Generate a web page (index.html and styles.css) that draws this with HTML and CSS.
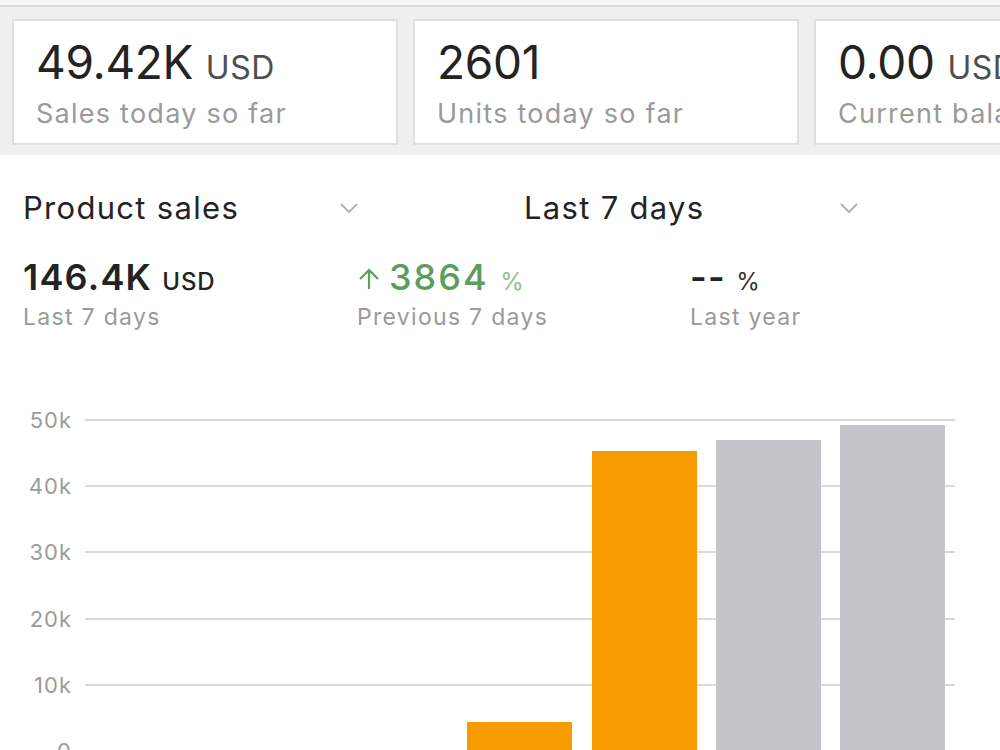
FILE: index.html
```html
<!DOCTYPE html>
<html lang="en">
<head>
    <meta charset="UTF-8">
    <meta name="viewport" content="width=device-width, initial-scale=1.0">
    <title>Sales dashboard</title>
    <link rel="stylesheet" href="styles.css">
</head>
<body>

    <div class="top-edge"></div>

    <!-- Today summary cards -->
    <section class="summary">
        <div class="card">
            <div class="card-value">49.42K <span class="unit">USD</span></div>
            <div class="card-label">Sales today so far</div>
        </div>
        <div class="card">
            <div class="card-value">2601</div>
            <div class="card-label">Units today so far</div>
        </div>
        <div class="card">
            <div class="card-value">0.00 <span class="unit">USD</span></div>
            <div class="card-label">Current balance</div>
        </div>
    </section>

    <section class="sales">
        <div class="filters">
            <div class="dropdown">
                <span>Product sales</span>
                <svg class="chevron" viewBox="0 0 20 12" width="20" height="12"><polyline points="2,2 10,10 18,2"/></svg>
            </div>
            <div class="dropdown">
                <span>Last 7 days</span>
                <svg class="chevron" viewBox="0 0 20 12" width="20" height="12"><polyline points="2,2 10,10 18,2"/></svg>
            </div>
        </div>

        <div class="stats">
            <div class="stat">
                <div class="stat-value">146.4K <span class="stat-unit">USD</span></div>
                <div class="stat-label">Last 7 days</div>
            </div>
            <div class="stat">
                <div class="stat-value up">
                    <svg class="arrow" viewBox="0 0 24 24" width="24" height="24"><path d="M12 22V3M3 12l9-9 9 9"/></svg>3864 <span class="stat-unit">%</span>
                </div>
                <div class="stat-label">Previous 7 days</div>
            </div>
            <div class="stat">
                <div class="stat-value">-- <span class="stat-unit dark">%</span></div>
                <div class="stat-label">Last year</div>
            </div>
        </div>

        <!-- Bar chart, 0 to 50k -->
        <div class="chart">
            <div class="tick"><span class="tick-label">50k</span><span class="tick-line"></span></div>
            <div class="tick"><span class="tick-label">40k</span><span class="tick-line"></span></div>
            <div class="tick"><span class="tick-label">30k</span><span class="tick-line"></span></div>
            <div class="tick"><span class="tick-label">20k</span><span class="tick-line"></span></div>
            <div class="tick"><span class="tick-label">10k</span><span class="tick-line"></span></div>
            <div class="tick"><span class="tick-label">0</span><span class="tick-line"></span></div>

            <div class="bars">
                <div class="slot"></div>
                <div class="slot"></div>
                <div class="slot"></div>
                <div class="slot"><div class="bar current" style="height: 8.8%"></div></div>
                <div class="slot"><div class="bar current" style="height: 90.6%"></div></div>
                <div class="slot"><div class="bar past" style="height: 94%"></div></div>
                <div class="slot"><div class="bar past" style="height: 98.5%"></div></div>
            </div>
        </div>
    </section>

</body>
</html>
```

FILE: styles.css
```css
/* Basic setup */
:root {
    --text-dark: #232323;
    --text-muted: #9a9a9a;
    --summary-bg: #efeff0;
    --card-border: #e0e0e2;
    --grid-line: #dadada;
    --green: #5a9d5c;
    --orange: #f79b00;
    --gray-bar: #c5c5c9;
}

* {
    margin: 0;
    padding: 0;
    box-sizing: border-box;
}

html, body {
    width: 100%;
    height: 100%;
    overflow: hidden;
    background-color: #ffffff;
    font-family: Inter, "Liberation Sans", sans-serif;
    color: var(--text-dark);
}

.top-edge {
    height: 5px;
    background-color: #f7f7f7;
}

/* Summary strip with the three cards */
.summary {
    display: flex;
    gap: 15px;
    padding: 12px 0 10px 12px;
    background-color: var(--summary-bg);
    border-top: 2px solid #dcdcde;
    overflow: hidden;
}

.card {
    flex-shrink: 0;
    width: 386px;
    height: 126px;
    padding: 18px 0 0 22px;
    background-color: #ffffff;
    border: 2px solid var(--card-border);
    white-space: nowrap;
}

.card-value {
    font-size: 46px;
    line-height: 1;
    letter-spacing: -0.3px;
}

.card-value .unit {
    font-size: 32px;
    color: #4f4f4f;
    letter-spacing: 0.5px;
}

.card-label {
    margin-top: 15px;
    font-size: 27px;
    line-height: 1;
    color: var(--text-muted);
    letter-spacing: 1.25px;
}

/* Product sales section */
.sales {
    padding-top: 37px;
}

.filters {
    display: flex;
    gap: 160px;
    padding-left: 23px;
}

.dropdown {
    display: flex;
    align-items: center;
    justify-content: space-between;
    width: 340px;
    font-size: 31px;
    line-height: 1;
    letter-spacing: 1.3px;
}

.dropdown:last-child {
    padding-left: 1px;
}

.chevron {
    fill: none;
    stroke: #b4b4b4;
    stroke-width: 2;
    margin-right: 4px;
}

.stats {
    display: grid;
    grid-template-columns: 334px 333px 300px;
    padding-left: 23px;
    margin-top: 36px;
}

.stat-value {
    display: flex;
    align-items: baseline;
    font-size: 36px;
    font-weight: 600;
    line-height: 1;
    letter-spacing: 1.2px;
    white-space: pre;
}

.stat-unit {
    font-size: 24px;
    font-weight: 500;
    letter-spacing: 0.8px;
}

.stat-value.up {
    color: var(--green);
    font-weight: 500;
    letter-spacing: 2px;
}

.stat-value.up .stat-unit {
    color: #8fc18f;
    font-weight: 400;
    margin-left: 0;
}

.stat-unit.dark {
    font-weight: 400;
    color: #333333;
}

.arrow {
    fill: none;
    stroke: var(--green);
    stroke-width: 2.2;
    margin-right: 8px;
    align-self: center;
    margin-top: 4px;
}

.stat-label {
    margin-top: 11px;
    font-size: 23px;
    line-height: 1;
    color: var(--text-muted);
    letter-spacing: 1.3px;
}

/* Chart */
.chart {
    position: relative;
    display: flex;
    flex-direction: column;
    justify-content: space-between;
    height: 331px;
    margin: 91px 45px 0 10px;
}

.tick {
    display: flex;
    align-items: center;
    gap: 13px;
    height: 0;
}

.tick-label {
    width: 62px;
    text-align: right;
    font-size: 22px;
    letter-spacing: 1px;
    color: #9c9c9c;
}

.tick-line {
    flex: 1;
    height: 2px;
    background-color: var(--grid-line);
}

.bars {
    position: absolute;
    top: 0;
    right: 0;
    bottom: 0;
    left: 75px;
    display: flex;
}

.slot {
    flex: 1;
    display: flex;
    align-items: flex-end;
    justify-content: center;
}

.bar {
    width: 105px;
}

.bar.current {
    background-color: var(--orange);
}

.bar.past {
    background-color: var(--gray-bar);
}
```
